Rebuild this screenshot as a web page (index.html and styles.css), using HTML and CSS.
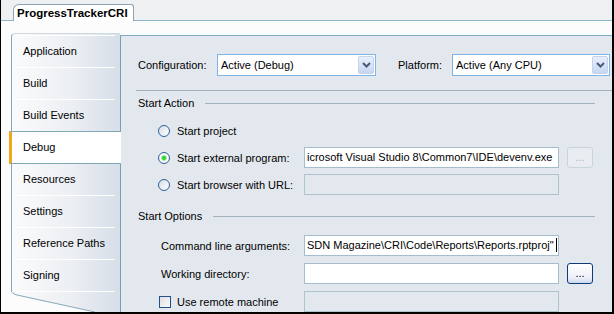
FILE: index.html
```html
<!DOCTYPE html>
<html lang="en">
<head>
    <meta charset="UTF-8">
    <title>ProgressTrackerCRI - Debug</title>
    <link rel="stylesheet" href="styles.css">
</head>
<body>
<div class="window">
    <div class="tabstrip">
        <div class="doc-tab">ProgressTrackerCRI</div>
    </div>
    <div class="page">
        <nav class="side">
            <div class="side-item">Application</div>
            <div class="side-item">Build</div>
            <div class="side-item">Build Events</div>
            <div class="side-item is-active">Debug</div>
            <div class="side-item">Resources</div>
            <div class="side-item">Settings</div>
            <div class="side-item">Reference Paths</div>
            <div class="side-item">Signing</div>
            <div class="side-end"></div>
            <svg class="side-foot" width="109" height="20" viewBox="0 0 109 20">
                <path d="M0 0 L1.5 0 Q2 2.5 6 3 L84 20 L0 20 Z" fill="#fcfcfd"/>
                <path d="M1.5 0 Q2 2.5 6 3 L84 20" fill="none" stroke="#86a8b8" stroke-width="1"/>
            </svg>
        </nav>

        <main class="panel">
            <div class="config">
                <span class="config-lbl">Configuration:</span>
                <div class="combo combo-config">
                    <span class="combo-text">Active (Debug)</span>
                    <span class="combo-btn"><svg width="9" height="6" viewBox="0 0 9 6"><polyline points="1,1 4.5,4.5 8,1" fill="none" stroke="#4a5b7c" stroke-width="2"/></svg></span>
                </div>
                <span class="platform-lbl">Platform:</span>
                <div class="combo combo-platform">
                    <span class="combo-text">Active (Any CPU)</span>
                    <span class="combo-btn"><svg width="9" height="6" viewBox="0 0 9 6"><polyline points="1,1 4.5,4.5 8,1" fill="none" stroke="#4a5b7c" stroke-width="2"/></svg></span>
                </div>
            </div>

            <div class="rule"></div>

            <!-- Start Action -->
            <div class="group-head">Start Action</div>
            <div class="choices choices-action">
                <div class="row">
                    <label class="row-lbl"><span class="radio"></span>Start project</label>
                </div>
                <div class="row">
                    <label class="row-lbl"><span class="radio is-on"></span>Start external program:</label>
                    <div class="box">icrosoft Visual Studio 8\Common7\IDE\devenv.exe</div>
                    <span class="dots is-off">...</span>
                </div>
                <div class="row">
                    <label class="row-lbl"><span class="radio"></span>Start browser with URL:</label>
                    <div class="box is-off"></div>
                </div>
            </div>

            <!-- Start Options -->
            <div class="group-head group-options">Start Options</div>
            <div class="choices choices-options">
                <div class="row">
                    <label class="row-lbl row-lbl-plain">Command line arguments:</label>
                    <div class="box">SDN Magazine\CRI\Code\Reports\Reports.rptproj"<span class="caret"></span></div>
                </div>
                <div class="row">
                    <label class="row-lbl row-lbl-plain">Working directory:</label>
                    <div class="box"></div>
                    <span class="dots">...</span>
                </div>
                <div class="row">
                    <label class="row-lbl row-lbl-check"><span class="check"></span>Use remote machine</label>
                    <div class="box is-off"></div>
                </div>
            </div>
        </main>
    </div>
</div>
</body>
</html>
```

FILE: styles.css
```css
/**
 * Base
 */
html, body {
    margin: 0;
    padding: 0;
}
body {
    font: 11px "Liberation Sans", Arial, sans-serif;
    color: #000;
    background: #fff;
}

.window {
    width: 614px;
    height: 314px;
    box-sizing: border-box;
    border-left: 1px solid #000;
    border-right: 2px solid #000;
    border-bottom: 2px solid #000;
    background: #fcfcfd;
    display: flex;
    flex-direction: column;
    overflow: hidden;
}

/**
 * Document tab on top
 */
.tabstrip {
    height: 20px;
    flex: none;
    display: flex;
    align-items: flex-end;
    padding-left: 12px;
    background: #eef0f2;
    border-bottom: 1px solid #8fb4ce;
}
.doc-tab {
    box-sizing: border-box;
    width: 121px;
    height: 17px;
    margin-bottom: -1px;
    padding-left: 3px;
    background: #fff;
    border: 1px solid #8ba4b4;
    border-bottom: 0;
    border-radius: 6px 3px 0 0;
    font-weight: bold;
    font-size: 11.5px;
    line-height: 16px;
    white-space: nowrap;
}

.page {
    flex: 1;
    min-height: 0;
    display: flex;
    padding: 12px 0 0 10px;
}

/**
 * Left side tabs
 */
.side {
    position: relative;
    z-index: 1;
    width: 108px;
    flex: none;
    display: flex;
    flex-direction: column;
    padding-top: 1px;
    border-left: 1px solid #86a8b8;
    border-top: 1px solid #cfd9e0;
    border-top-left-radius: 4px;
    background: linear-gradient(to right, #fafbfc, #eceff3 55%, #d6dee8);
}
.side-item {
    height: 31px;
    line-height: 31px;
    margin: 0 5px 0 3px;
    padding-left: 8px;
    border-top: 1px solid #fff;
    white-space: nowrap;
}
.side-item.is-active {
    margin: 0 -1px 0 -3px;
    padding-left: 11px;
    background: #fff;
    border-top: 1px solid #7fa7b6;
    border-bottom: 1px solid #7fa7b6;
    border-left: 3px solid #f2a61c;
}
.is-active + .side-item {
    border-top: 0;
}
.side-end {
    flex: 1;
    margin: 0 5px 0 3px;
    border-top: 1px solid #fff;
}
.side-foot {
    display: block;
    flex: none;
    margin-left: -1px;
}

/**
 * Debug page
 */
.panel {
    flex: 1;
    margin-top: 2px;
    background: #e3e8ee;
    border-left: 1px solid #73a3b3;
    border-top: 1px solid #7fa9c4;
}

.config {
    display: flex;
    align-items: center;
    height: 22px;
    margin-top: 18px;
    padding-left: 17px;
}
.config-lbl {
    width: 79px;
}
.platform-lbl {
    width: 54px;
    margin-left: 22px;
}
.combo {
    box-sizing: border-box;
    height: 22px;
    display: flex;
    align-items: center;
    background: #fff;
    border: 1px solid #7eb4e6;
}
.combo-config {
    width: 159px;
}
.combo-platform {
    width: 158px;
}
.combo-text {
    flex: 1;
    padding-left: 3px;
    white-space: nowrap;
}
.combo-btn {
    box-sizing: border-box;
    width: 16px;
    height: 18px;
    margin-right: 1px;
    display: flex;
    align-items: center;
    justify-content: center;
    border: 1px solid #c5d4ec;
    border-radius: 2px;
    background: linear-gradient(#e8effc, #c8d6ef);
}

.rule {
    height: 1px;
    margin: 14px 0 0 15px;
    background: #a3b2bd;
}

.group-head {
    display: flex;
    align-items: center;
    gap: 11px;
    margin: 6px 17px 0 17px;
    line-height: 13px;
}
.group-head::after {
    content: "";
    flex: 1;
    height: 1px;
    background: #a3b2bd;
}
.group-options {
    margin-top: 15px;
}

.choices {
    display: flex;
    flex-direction: column;
    padding-left: 37px;
}
.choices-action {
    margin-top: 10px;
    gap: 6px;
}
.choices-options {
    margin-top: 12px;
    gap: 7px;
}
.row {
    display: flex;
    align-items: center;
    height: 21px;
}
.row-lbl {
    width: 146px;
    flex: none;
    display: flex;
    align-items: center;
    gap: 7px;
    white-space: nowrap;
}
.row-lbl-plain {
    box-sizing: border-box;
    padding-left: 3px;
}
.row-lbl-check {
    box-sizing: border-box;
    padding-left: 1px;
    gap: 6px;
}

.radio {
    box-sizing: border-box;
    width: 12px;
    height: 12px;
    flex: none;
    border-radius: 50%;
    border: 1px solid #2a5f9c;
    background: linear-gradient(135deg, #d8dfe8, #fff);
}
.radio.is-on {
    background: radial-gradient(circle, #2ec82a 0, #3fd43a 1.5px, #a6e6a2 2.5px, #fff 3.5px, #e6ebf1 100%);
}
.check {
    box-sizing: border-box;
    width: 12px;
    height: 12px;
    flex: none;
    border: 1px solid #23508a;
    background: linear-gradient(135deg, #dcdfe3, #fbfbfb);
}

.box {
    box-sizing: border-box;
    width: 255px;
    height: 21px;
    flex: none;
    padding-left: 2px;
    line-height: 19px;
    background: #fff;
    border: 1px solid #a5bdcc;
    white-space: nowrap;
    overflow: hidden;
}
.box.is-off {
    background: transparent;
    border-color: #aec4cd;
}
.caret {
    display: inline-block;
    width: 1px;
    height: 14px;
    margin-left: 2px;
    vertical-align: -3px;
    background: #000;
}

.dots {
    box-sizing: border-box;
    width: 26px;
    height: 21px;
    margin-left: 8px;
    text-align: center;
    line-height: 19px;
    border: 1px solid #0b3c78;
    border-radius: 3px;
    background: linear-gradient(#ffffff, #eef1f8 70%, #cdd7ee);
}
.dots.is-off {
    color: #a9b5c0;
    border-color: #c8d4dc;
    background: #e9edf2;
}
```
